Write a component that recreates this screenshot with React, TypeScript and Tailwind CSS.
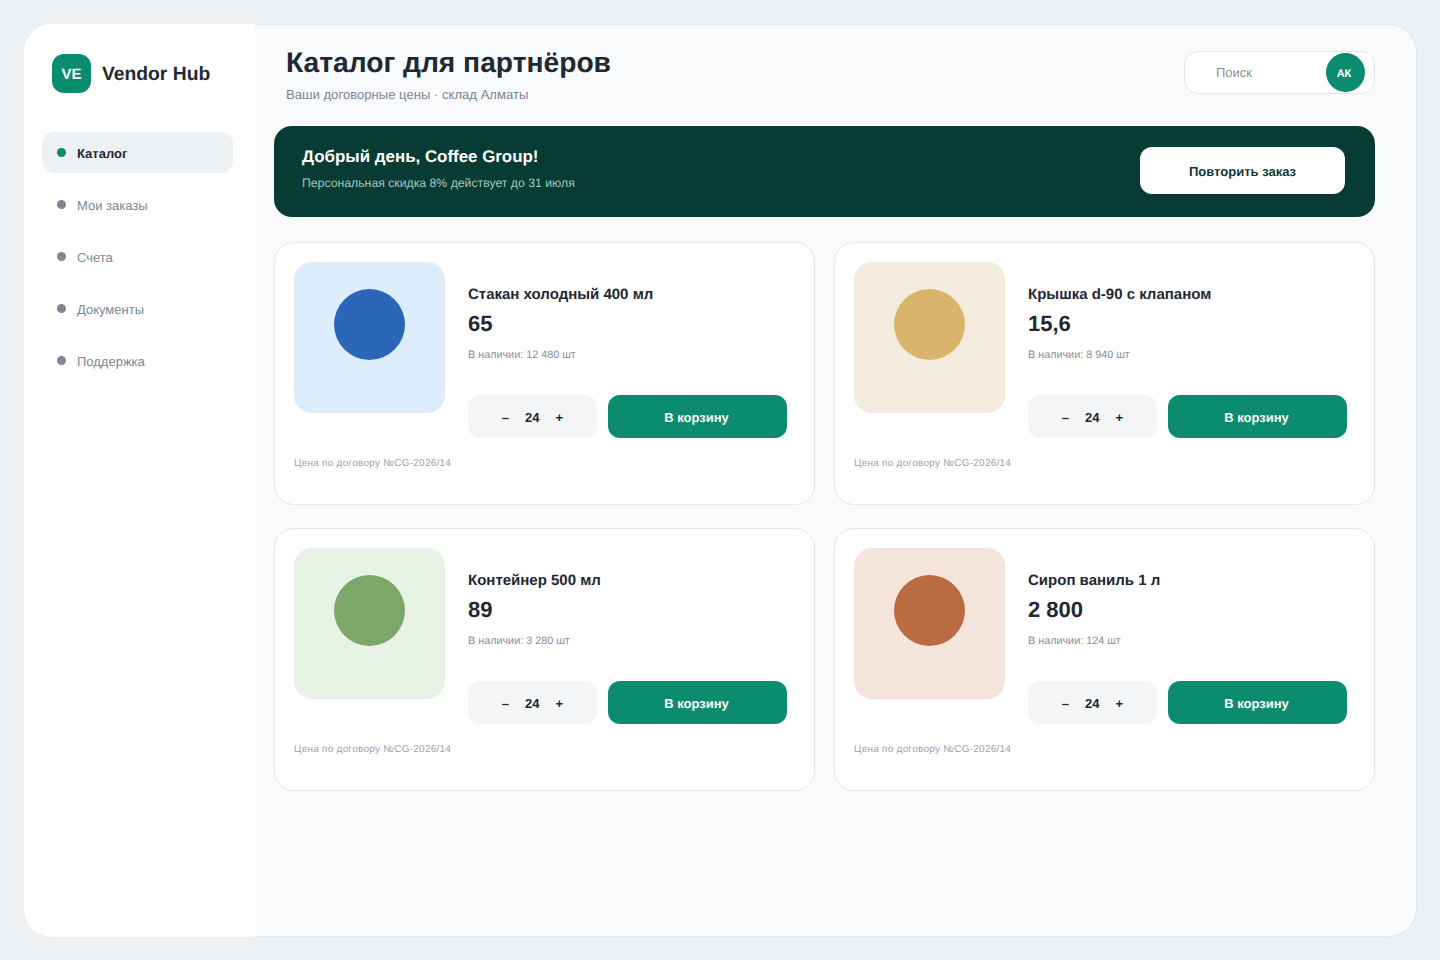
const nav = ["Каталог", "Мои заказы", "Счета", "Документы", "Поддержка"];
const items = [
  { name: "Стакан холодный 400 мл", price: "65", stock: "В наличии: 12 480 шт", bg: "bg-[#dcedfd]", dot: "bg-[#2b66b8]" },
  { name: "Крышка d-90 с клапаном", price: "15,6", stock: "В наличии: 8 940 шт", bg: "bg-[#f3ebdd]", dot: "bg-[#d9b56c]" },
  { name: "Контейнер 500 мл", price: "89", stock: "В наличии: 3 280 шт", bg: "bg-[#e8f3e6]", dot: "bg-[#7da768]" },
  { name: "Сироп ваниль 1 л", price: "2 800", stock: "В наличии: 124 шт", bg: "bg-[#f6e5dc]", dot: "bg-[#bb6b42]" },
];

function Card({ item }: { item: (typeof items)[number] }) {
  return (
    <div className="h-[263px] rounded-[20px] border border-[#e2e8ec] bg-white pl-[19px] pt-[19px] pr-[27px]">
      <div className="flex gap-[23px]">
        <div className={`flex h-[151px] w-[151px] shrink-0 justify-center rounded-[18px] pt-[27px] ${item.bg}`}>
          <div className={`h-[71px] w-[71px] rounded-full ${item.dot}`} />
        </div>
        <div className="min-w-0 flex-1 pt-[23px]">
          <div className="text-[15px] leading-[20px] font-semibold text-[#1f2933]">{item.name}</div>
          <div className="mt-[6px] text-[22px] leading-[26px] font-bold text-[#1f2933]">{item.price}</div>
          <div className="mt-[11px] text-[10.8px] leading-[14px] text-[#868e96]">{item.stock}</div>
          <div className="mt-[33px] flex gap-[11px]">
            <div className="flex h-[43px] w-[129px] items-center justify-center gap-[16px] rounded-[12px] bg-[#f3f5f6] pt-[3px] text-[13px] font-semibold text-[#1f2933]">
              <span>–</span>
              <span>24</span>
              <span>+</span>
            </div>
            <div className="flex h-[43px] flex-1 items-center justify-center rounded-[12px] bg-[#0c8c6e] pr-[2px] pt-[3px] text-[13px] font-semibold text-white">
              В корзину
            </div>
          </div>
        </div>
      </div>
      <div className="mt-[19px] text-[10px] leading-[14px] tracking-[0.25px] text-[#9ca3a8]">Цена по договору №CG-2026/14</div>
    </div>
  );
}

export default function App() {
  return (
    <div className="h-[960px] w-[1440px] overflow-hidden bg-[#edf1f4] pl-[24px] pt-[24px] font-['Liberation_Sans',sans-serif] [text-rendering:geometricPrecision]">
      <div className="flex h-[913px] w-[1393px]">
        <aside className="w-[231px] shrink-0 rounded-l-[28px] bg-white pl-[18px] pr-[22px] pt-[30px]">
          <div className="flex items-center gap-[11px] pl-[10px]">
            <div className="flex h-[39px] w-[39px] items-center justify-center rounded-[12px] bg-[#0c8c6e] pt-[3px] text-[15px] font-bold text-white">VE</div>
            <div className="pt-[4px] text-[19.3px] font-semibold text-[#1f2933]">Vendor Hub</div>
          </div>
          <nav className="mt-[39px] flex flex-col gap-[11px]">
            {nav.map((n, i) => (
              <div key={n} className={`flex h-[41px] items-center gap-[11px] rounded-[12px] pl-[15px] text-[13px] ${i === 0 ? "bg-[#edf1f4] font-semibold text-[#1f2933]" : "text-[#7b8794]"}`}>
                <span className={`h-[9px] w-[9px] rounded-full ${i === 0 ? "bg-[#0c8c6e]" : "bg-[#7b8794]"}`} />
                <span className="pt-[2px]">{n}</span>
              </div>
            ))}
          </nav>
        </aside>
        <main className="flex-1 rounded-r-[28px] border border-l-0 border-[#e2e8ec] bg-[#f8fafc] pl-[19px] pr-[41px]">
          <header className="flex h-[101px] justify-between">
            <div className="pl-[12px] pt-[19px]">
              <h1 className="text-[28.2px] leading-[36px] font-bold text-[#1f2933]">Каталог для партнёров</h1>
              <p className="mt-[6px] text-[13.1px] leading-[18px] text-[#7b8794]">Ваши договорные цены · склад Алматы</p>
            </div>
            <div className="mt-[26px] flex h-[43px] w-[191px] items-center justify-between rounded-[14px] border border-[#e2e8ec] bg-white pl-[31px] pr-[9px] text-[13px] text-[#8a8f94]">
              <span>Поиск</span>
              <div className="flex h-[39px] w-[39px] items-center justify-center rounded-full bg-[#0c8c6e] pr-[3px] pt-[3px] text-[11px] font-bold text-white">АК</div>
            </div>
          </header>
          <section className="flex h-[91px] items-center justify-between rounded-[18px] bg-[#083b33] pl-[28px] pr-[30px]">
            <div className="pb-[8px]">
              <div className="text-[16.9px] leading-[24px] font-bold text-white">Добрый день, Coffee Group!</div>
              <div className="mt-[6px] text-[12.25px] leading-[16px] text-[#a3c6bd]">Персональная скидка 8% действует до 31 июля</div>
            </div>
            <div className="mb-[2px] flex h-[47px] w-[205px] items-center justify-center rounded-[12px] bg-white pt-[2px] text-[13px] font-bold text-[#083b33]">Повторить заказ</div>
          </section>
          <section className="mt-[25px] grid grid-cols-2 gap-x-[19px] gap-y-[23px]">
            {items.map((it) => (
              <Card key={it.name} item={it} />
            ))}
          </section>
        </main>
      </div>
    </div>
  );
}
